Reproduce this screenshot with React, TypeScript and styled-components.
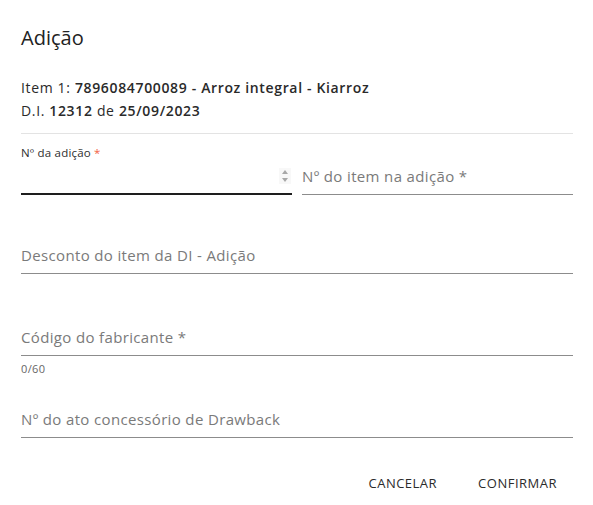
import styled, { createGlobalStyle } from 'styled-components';

const GlobalStyle = createGlobalStyle`
  html, body {
    margin: 0;
    padding: 0;
    background: #ffffff;
  }
  body {
    font-family: "Open Sans", "Liberation Sans", sans-serif;
    color: #333333;
  }
`;

const Dialog = styled.div`
  width: 593px;
  height: 505px;
  box-sizing: border-box;
  padding: 24px 20px 0 21px;
  display: flex;
  flex-direction: column;
`;

const Title = styled.h2`
  margin: 0;
  font-size: 20px;
  font-weight: 400;
  line-height: 28px;
  color: #222222;
`;

const Info = styled.div`
  margin-top: 24px;
  font-size: 14px;
  line-height: 23px;
  letter-spacing: 0.65px;
  color: #2a2a2a;
  padding-bottom: 11px;
  border-bottom: 1px solid #e3e3e3;

  b {
    font-weight: 600;
  }
`;

const Row = styled.div`
  display: grid;
  grid-template-columns: 1fr 1fr;
  column-gap: 10px;
  align-items: end;
  margin-top: 13px;
`;

const Field = styled.div<{ $top?: number }>`
  display: flex;
  flex-direction: column;
  margin-top: ${(p) => p.$top ?? 0}px;
`;

const ShrunkLabel = styled.label`
  font-size: 11.5px;
  line-height: 12px;
  letter-spacing: 0.2px;
  color: #2e2e2e;

  span {
    color: #f2613f;
  }
`;

const InputBox = styled.div<{ $focused?: boolean }>`
  height: 36px;
  box-sizing: border-box;
  display: flex;
  align-items: flex-end;
  justify-content: space-between;
  padding-bottom: 8px;
  border-bottom: ${(p) => (p.$focused ? '2px solid #1e1e1e' : '1px solid #8c8c8c')};
  font-size: 15px;
  line-height: 20px;
  letter-spacing: 0.35px;
  color: #7a7a7a;
`;

const Spinner = styled.div`
  width: 12px;
  height: 16px;
  margin-bottom: 1px;
  margin-right: 1px;
  background: #f8f8f8;
  display: flex;
  flex-direction: column;
  align-items: center;
  justify-content: space-around;
`;

const Helper = styled.div`
  margin-top: 7px;
  font-size: 11px;
  line-height: 12px;
  letter-spacing: 0.4px;
  color: #666666;
`;

const Actions = styled.div`
  margin-top: 30px;
  display: flex;
  justify-content: flex-end;
  gap: 9px;
`;

const TextButton = styled.button`
  background: none;
  border: none;
  padding: 6px 16px;
  font-family: inherit;
  font-size: 13px;
  line-height: 18px;
  letter-spacing: 0.5px;
  text-transform: uppercase;
  color: #2b2b2b;
  cursor: pointer;
`;

function Arrow({ up }: { up?: boolean }) {
  return (
    <svg width="6" height="4" viewBox="0 0 6 4">
      <path d={up ? 'M0 4 L3 0 L6 4 Z' : 'M0 0 L3 4 L6 0 Z'} fill="#a8a8a8" />
    </svg>
  );
}

export default function App() {
  return (
    <>
      <GlobalStyle />
      <Dialog>
        <Title>Adição</Title>
        <Info>
          Item 1: <b>7896084700089 - Arroz integral - Kiarroz</b>
          <br />
          D.I. <b>12312</b> de <b>25/09/2023</b>
        </Info>

        <Row>
          <Field>
            <ShrunkLabel>
              Nº da adição <span>*</span>
            </ShrunkLabel>
            <InputBox $focused>
              <span />
              <Spinner>
                <Arrow up />
                <Arrow />
              </Spinner>
            </InputBox>
          </Field>
          <Field>
            <InputBox>Nº do item na adição *</InputBox>
          </Field>
        </Row>

        <Field $top={43}>
          <InputBox>Desconto do item da DI - Adição</InputBox>
        </Field>

        <Field $top={46}>
          <InputBox>Código do fabricante *</InputBox>
          <Helper>0/60</Helper>
        </Field>

        <Field $top={27}>
          <InputBox>Nº do ato concessório de Drawback</InputBox>
        </Field>

        <Actions>
          <TextButton>Cancelar</TextButton>
          <TextButton>Confirmar</TextButton>
        </Actions>
      </Dialog>
    </>
  );
}
